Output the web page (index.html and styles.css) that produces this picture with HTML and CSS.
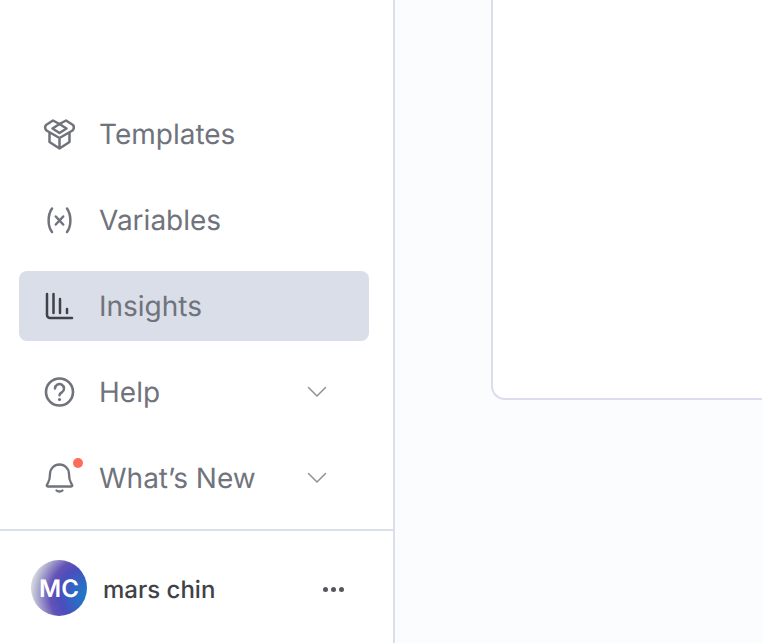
FILE: index.html
```html
<!DOCTYPE html>
<html lang="en">
<head>
<meta charset="utf-8">
<title>Insights</title>
<link rel="stylesheet" href="styles.css">
</head>
<body>
<div class="app">
  <aside class="sidebar">
    <nav class="nav">
      <a class="item">
        <svg class="icon" viewBox="0 0 32 32" fill="none"><path d="M16.500 6 10 2.500 3 7c-1.200 1.800-1.200 3.800.5 5.500L16.500 20l13-7.500c1.700-1.700 1.700-3.700.5-5.500l-7-4.500L16.500 6l7 4.500-7 4.500-7-4.500 7-4.500zM6.500 15v9l10 6.500 10-6.500v-9M16.500 20v10.500" stroke="currentColor" stroke-width="2.500" stroke-linejoin="round" stroke-linecap="round"/></svg>
        <span class="label">Templates</span>
      </a>
      <a class="item">
        <svg class="icon" viewBox="0 0 32 32" fill="none"><path d="M9 4.500C4.500 11 4.500 22 9 28M24 4.500c4.500 6.500 4.500 17.500 0 23.500M12.800 12.500l7.400 8M20.200 12.500l-7.400 8" stroke="currentColor" stroke-width="2.500" stroke-linecap="round"/></svg>
        <span class="label">Variables</span>
      </a>
      <a class="item active">
        <svg class="icon dark" viewBox="0 0 32 32" fill="none"><path d="M4 4v21a3 3 0 0 0 3 3h22M10.500 4v19M17 9v14M24 19v4" stroke="currentColor" stroke-width="2.500" stroke-linecap="round"/></svg>
        <span class="label">Insights</span>
      </a>
      <a class="item">
        <svg class="icon" viewBox="0 0 32 32" fill="none"><circle cx="16.500" cy="16" r="13.500" stroke="currentColor" stroke-width="2.600"/><path d="M12 12.500a4.500 4.500 0 1 1 6.800 3.900c-1.500.9-2.300 1.700-2.300 2.800" stroke="currentColor" stroke-width="2.500" stroke-linecap="round"/><circle cx="16.500" cy="23.500" r="1.600" fill="currentColor"/></svg>
        <span class="label">Help</span>
        <svg class="chevron" viewBox="0 0 20 12" fill="none"><path d="M1.500 1.500 10 10l8.500-8.500" stroke="currentColor" stroke-width="1.500" stroke-linecap="round" stroke-linejoin="round"/></svg>
      </a>
      <a class="item">
        <span class="bell">
          <svg class="icon" viewBox="0 0 32 32" fill="none"><path d="M16.500 2.500a9.500 9.500 0 0 0-9.500 9.500c0 4-.5 6.500-2 9-.8 1.200-1.300 2-1.300 2.500 0 .6.500 1 1.200 1h23.200c.7 0 1.200-.4 1.200-1 0-.5-.5-1.300-1.300-2.500-1.500-2.500-2-5-2-9a9.500 9.500 0 0 0-9.500-9.500zM13.500 28.500c1.500 1.300 4.500 1.300 6 0" stroke="currentColor" stroke-width="2.300" stroke-linecap="round" stroke-linejoin="round"/></svg>
          <span class="dot"></span>
        </span>
        <span class="label">What’s New</span>
        <svg class="chevron" viewBox="0 0 20 12" fill="none"><path d="M1.500 1.500 10 10l8.500-8.500" stroke="currentColor" stroke-width="1.500" stroke-linecap="round" stroke-linejoin="round"/></svg>
      </a>
    </nav>
    <footer class="user">
      <div class="avatar">MC</div>
      <span class="name">mars chin</span>
      <span class="more"><i></i><i></i><i></i></span>
    </footer>
  </aside>
  <main class="main">
    <div class="card"></div>
  </main>
</div>
</body>
</html>
```
FILE: styles.css
```css
* { box-sizing: border-box; }
html, body { margin: 0; height: 100%; overflow: hidden; }
body { font-family: Inter, "Liberation Sans", sans-serif; background: #fff; text-rendering: geometricPrecision; }
.app { display: flex; height: 643px; width: 762px; overflow: hidden; }
.sidebar {
  width: 395px;
  flex: none;
  border-right: 2px solid #dadfea;
  background: #fff;
  display: flex;
  flex-direction: column;
}
.nav {
  flex: 1;
  padding: 99px 24px 0 19px;
  display: flex;
  flex-direction: column;
  gap: 16px;
}
.item {
  height: 70px;
  padding: 0 42px 0 24px;
  border-radius: 8px;
  display: flex;
  align-items: center;
  color: #70737c;
}
.item.active { background: #dadee8; }
.icon { width: 32px; height: 32px; flex: none; display: block; color: #70737c; }
.icon.dark { color: #404247; }
.bell { position: relative; width: 32px; height: 32px; flex: none; }
.dot {
  position: absolute;
  left: 30px;
  top: -4px;
  width: 10px;
  height: 10px;
  border-radius: 50%;
  background: #ff6b5b;
}
.label { flex: 1; margin-left: 24px; font-size: 28px; line-height: 34px; }
.chevron { width: 20px; height: 12px; flex: none; color: #8f9198; }
.user {
  height: 114px;
  flex: none;
  border-top: 2px solid #dadfea;
  padding: 0 49px 0 31px;
  display: flex;
  align-items: center;
}
.avatar {
  width: 56px;
  height: 56px;
  margin-top: 2px;
  flex: none;
  border-radius: 50%;
  display: flex;
  align-items: center;
  justify-content: center;
  color: #fff;
  font-size: 24px;
  font-weight: 600;
  background: radial-gradient(circle at 100% 62%, #1f78c8 0%, #2a6cc4 18%, #4b4dbd 42%, #6353b6 56%, #d0d3dc 84%);
}
.name { flex: 1; margin-left: 16px; margin-top: 4px; font-size: 24px; font-weight: 500; color: #404247; }
.more { display: flex; gap: 3px; margin-top: 4px; }
.more i { width: 5px; height: 5px; border-radius: 50%; background: #55575d; display: block; }
.main { flex: 1; min-width: 0; background: #fbfcfe; padding: 0 0 0 96px; }
.card {
  height: 400px;
  background: #fff;
  border-left: 2px solid #dcdcee;
  border-bottom: 2px solid #dcdcee;
  border-radius: 0 0 0 14px;
}
```
